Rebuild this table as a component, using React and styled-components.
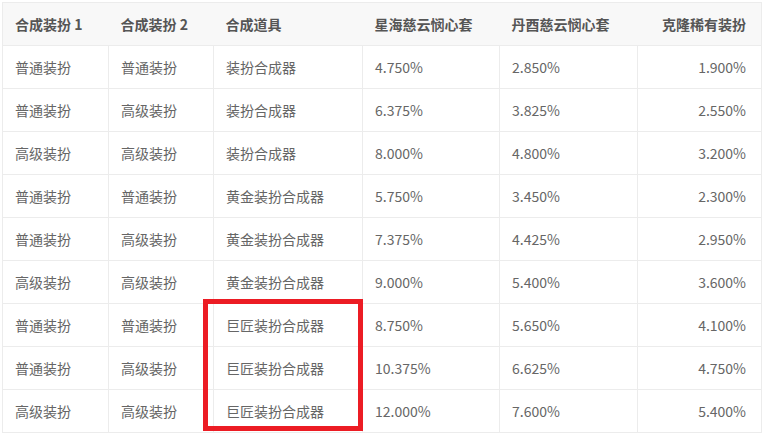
import React from "react";
import styled, { createGlobalStyle } from "styled-components";

const GlobalStyle = createGlobalStyle`
  body {
    margin: 0;
    background: #fff;
    font-family: "Noto Sans CJK SC", "Noto Sans", sans-serif;
  }
`;

const columns = [
  { title: "合成装扮 1", width: 106 },
  { title: "合成装扮 2", width: 105 },
  { title: "合成道具", width: 149 },
  { title: "星海慈云悯心套", width: 137 },
  { title: "丹酉慈云悯心套", width: 138 },
  { title: "克隆稀有装扮", width: 124, right: true },
];

const rows = [
  ["普通装扮", "普通装扮", "装扮合成器", "4.750%", "2.850%", "1.900%"],
  ["普通装扮", "高级装扮", "装扮合成器", "6.375%", "3.825%", "2.550%"],
  ["高级装扮", "高级装扮", "装扮合成器", "8.000%", "4.800%", "3.200%"],
  ["普通装扮", "普通装扮", "黄金装扮合成器", "5.750%", "3.450%", "2.300%"],
  ["普通装扮", "高级装扮", "黄金装扮合成器", "7.375%", "4.425%", "2.950%"],
  ["高级装扮", "高级装扮", "黄金装扮合成器", "9.000%", "5.400%", "3.600%"],
  ["普通装扮", "普通装扮", "巨匠装扮合成器", "8.750%", "5.650%", "4.100%"],
  ["普通装扮", "高级装扮", "巨匠装扮合成器", "10.375%", "6.625%", "4.750%"],
  ["高级装扮", "高级装扮", "巨匠装扮合成器", "12.000%", "7.600%", "5.400%"],
];

const App = () => {
  return (
    <>
      <GlobalStyle />
      <Page>
        <Frame>
          <Table>
            <colgroup>
              {columns.map((c) => (
                <col key={c.title} style={{ width: c.width }} />
              ))}
            </colgroup>
            <thead>
              <tr>
                {columns.map((c) => (
                  <HeadCell key={c.title} $right={c.right}>
                    {c.title}
                  </HeadCell>
                ))}
              </tr>
            </thead>
            <tbody>
              {rows.map((row, i) => (
                <tr key={i}>
                  {row.map((val, j) => (
                    <Cell key={j} $right={columns[j].right}>
                      {val}
                    </Cell>
                  ))}
                </tr>
              ))}
            </tbody>
          </Table>
          <Highlight />
        </Frame>
      </Page>
    </>
  );
};

export default App;

const Page = styled.div`
  padding: 2px;
`;

const Frame = styled.div`
  position: relative;
  width: 760px;
`;

const Table = styled.table`
  border-collapse: collapse;
  table-layout: fixed;
  width: 760px;
  border: 1px solid #ececec;
  font-size: 14px;
`;

const HeadCell = styled.th`
  background-color: #f8f8f8;
  border-bottom: 1px solid #ececec;
  color: #555;
  font-weight: 600;
  height: 42px;
  padding: 0 15px 0 12px;
  text-align: ${(p) => (p.$right ? "right" : "left")};
  white-space: nowrap;
`;

const Cell = styled.td`
  border: 1px solid #ececec;
  color: #666;
  height: 42px;
  padding: 0 15px 0 12px;
  text-align: ${(p) => (p.$right ? "right" : "left")};
  white-space: nowrap;
`;

const Highlight = styled.div`
  position: absolute;
  left: 201px;
  top: 297px;
  width: 160px;
  height: 132px;
  box-sizing: border-box;
  border: 5px solid #ec1c24;
  pointer-events: none;
`;
